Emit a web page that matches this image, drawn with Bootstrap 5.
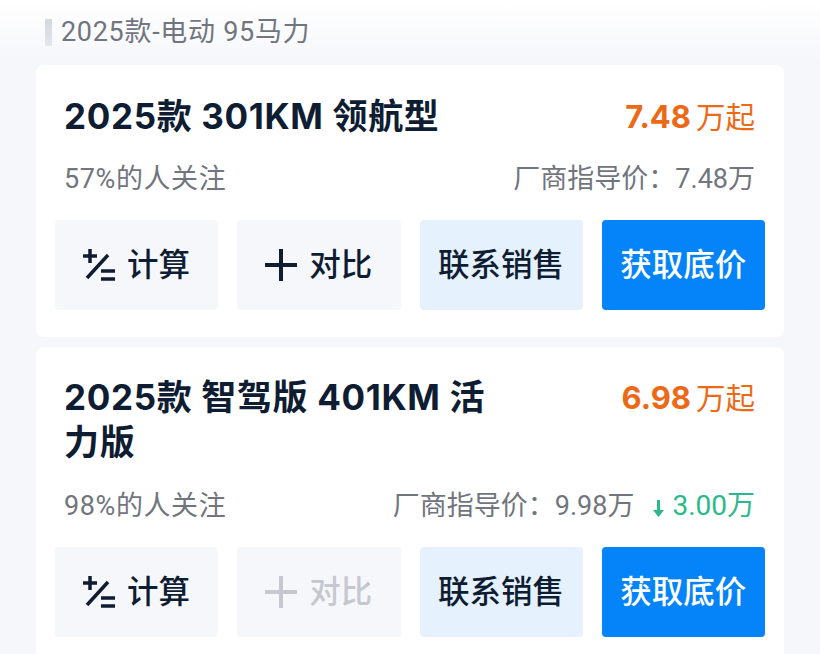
<!doctype html>
<html lang="zh"><head><meta charset="utf-8">
<link href="https://cdn.jsdelivr.net/npm/bootstrap@5.3.0/dist/css/bootstrap.min.css" rel="stylesheet">
<style>
html,body{height:654px;overflow:hidden}
body{background:linear-gradient(#fff 0,#f6f7fb 62px);font-family:"Inter","Noto Sans CJK SC",sans-serif;color:#0f1d33;padding:16px 36px 0}
.sec-head{height:32px;font-family:"Roboto","Noto Sans CJK SC",sans-serif;font-size:27px;line-height:32px;color:#71757e;margin-left:9px;gap:9px;margin-bottom:17px;letter-spacing:.7px}
.sec-bar{width:7px;height:27px;background:linear-gradient(#d4d7de,#e4e6ec)}
.trim-card{background:#fff;border-radius:8px;padding:0 19px;margin-bottom:10px}
.trim-top{padding:29px 10px 0 9px}
.trim-wrap .trim-top{padding-top:28px}
.trim-title{font-size:35px;line-height:45px;font-weight:700;max-width:440px;margin:0;letter-spacing:.65px}
.trim-price{font-size:29.500px;line-height:45px;color:#ec6a17;white-space:nowrap}
.trim-price b{font-size:31px;font-weight:700;margin-right:5px}
.trim-meta{padding:0 10px 0 9px;font-family:"Roboto","Noto Sans CJK SC",sans-serif;font-size:27px;line-height:36px;color:#71757e;margin-top:21px;margin-bottom:23px}
.trim-wrap .trim-meta{margin-top:23px}
.trim-follow{letter-spacing:.6px}
.trim-drop{color:#2bb98a;margin-left:18px;font-size:28px}
.act-row{gap:19px;padding-bottom:27px}
.act-btn{flex:1 1 0;height:90px;border:0;border-radius:4px;font-size:31.500px;font-weight:500;background:#f6f7fb;color:#0f1d33;gap:12px;padding:0}
.act-btn:hover{background:#f6f7fb;color:#0f1d33}
.act-sales,.act-sales:hover{background:#e5f1fd}
.act-main,.act-main:hover{background:#0584f9;color:#fff}
.act-off,.act-off:hover{color:#c5c8cf}
.act-btn svg{flex:none}
</style></head><body>
<div class="sec-head d-flex align-items-center"><span class="sec-bar"></span><span>2025款-电动 95马力</span></div>

<div class="trim-card">
<div class="trim-top d-flex justify-content-between align-items-start">
<h2 class="trim-title">2025款 301KM 领航型</h2>
<div class="trim-price"><b>7.48</b>万起</div></div>
<div class="trim-meta d-flex justify-content-between"><span class="trim-follow">57%的人关注</span><span>厂商指导价：7.48万</span></div>
<div class="act-row d-flex">
<button class="btn act-btn d-flex align-items-center justify-content-center"><svg width="32" height="32" viewBox="0 0 32 32" fill="none" stroke="currentColor" stroke-width="3.500"><path d="M0 7h14M7 0v14M4 29 25 6M18 22h14M18 30h14"/></svg>计算</button>
<button class="btn act-btn d-flex align-items-center justify-content-center"><svg width="32" height="32" viewBox="0 0 32 32" fill="none" stroke="currentColor" stroke-width="4"><path d="M0 16h32M16 0v32"/></svg>对比</button>
<button class="btn act-btn act-sales d-flex align-items-center justify-content-center">联系销售</button>
<button class="btn act-btn act-main d-flex align-items-center justify-content-center">获取底价</button>
</div></div>

<div class="trim-card trim-wrap">
<div class="trim-top d-flex justify-content-between align-items-start">
<h2 class="trim-title">2025款 智驾版 401KM 活力版</h2>
<div class="trim-price"><b>6.98</b>万起</div></div>
<div class="trim-meta d-flex justify-content-between"><span class="trim-follow">98%的人关注</span><span>厂商指导价：9.98万<span class="trim-drop"><svg width="13" height="20" viewBox="0 0 13 20" fill="currentColor"><path d="M5 2h3v10h4l-5.500 7L1 12h4z"/></svg> 3.00万</span></span></div>
<div class="act-row d-flex">
<button class="btn act-btn d-flex align-items-center justify-content-center"><svg width="32" height="32" viewBox="0 0 32 32" fill="none" stroke="currentColor" stroke-width="3.500"><path d="M0 7h14M7 0v14M4 29 25 6M18 22h14M18 30h14"/></svg>计算</button>
<button class="btn act-btn act-off d-flex align-items-center justify-content-center"><svg width="32" height="32" viewBox="0 0 32 32" fill="none" stroke="currentColor" stroke-width="4"><path d="M0 16h32M16 0v32"/></svg>对比</button>
<button class="btn act-btn act-sales d-flex align-items-center justify-content-center">联系销售</button>
<button class="btn act-btn act-main d-flex align-items-center justify-content-center">获取底价</button>
</div></div>
<script src="https://cdn.jsdelivr.net/npm/bootstrap@5.3.0/dist/js/bootstrap.bundle.min.js"></script>
</body></html>
